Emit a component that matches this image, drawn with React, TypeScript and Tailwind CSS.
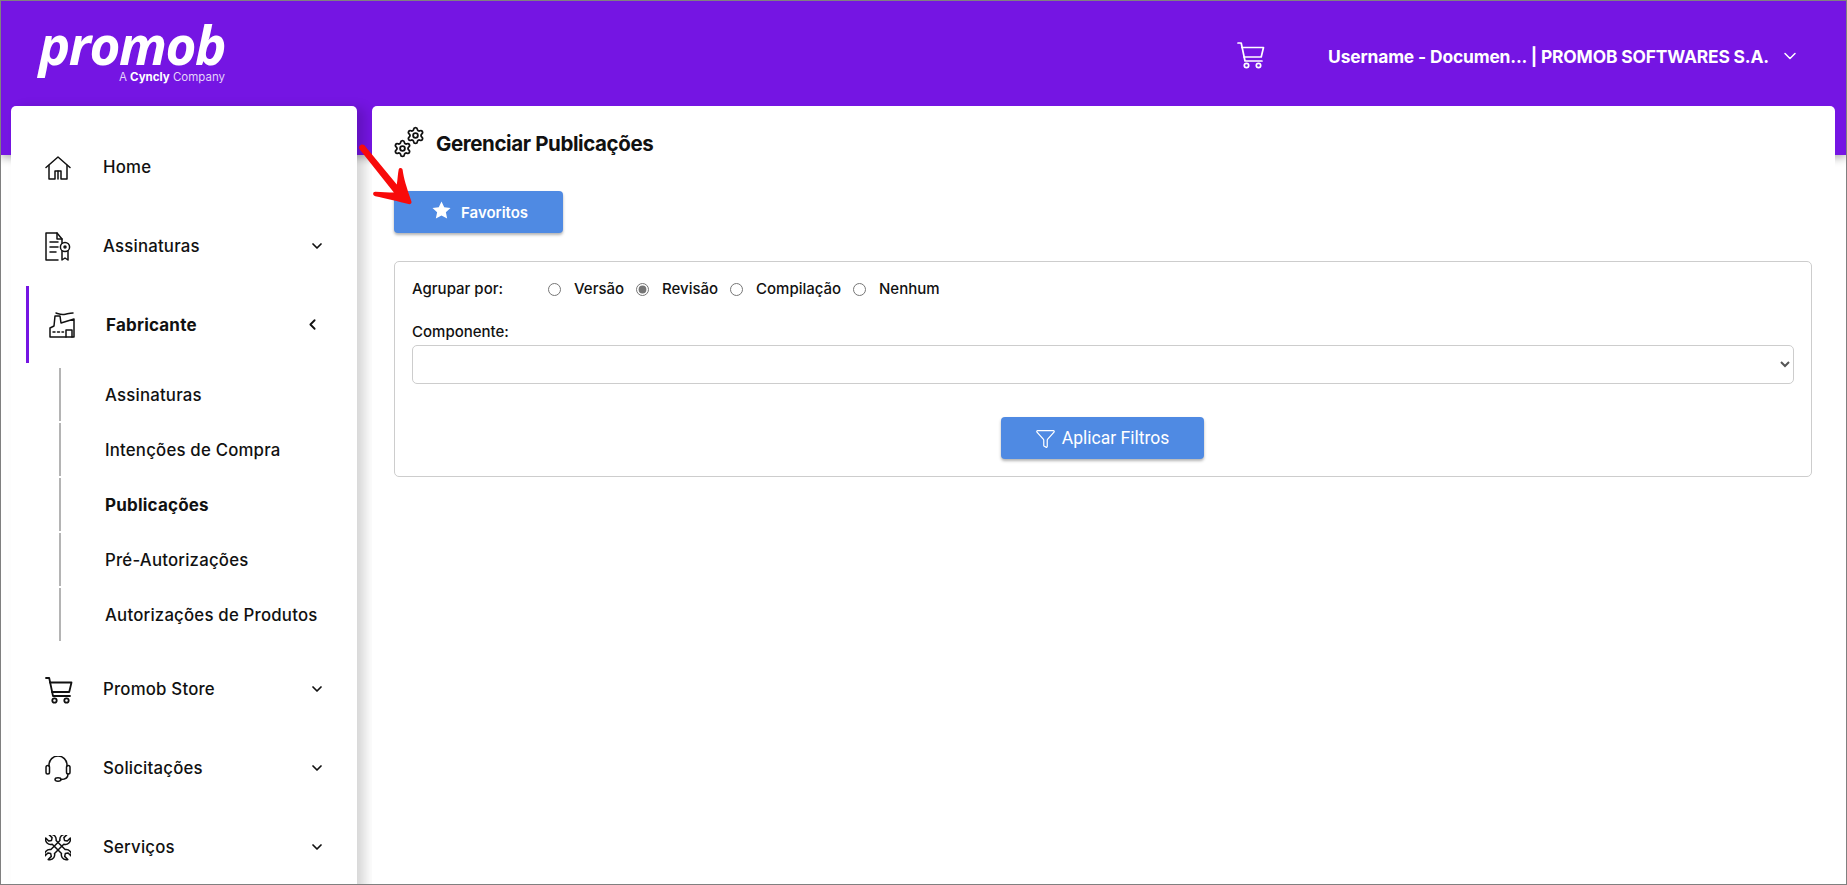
import React from "react";
import { ChevronDown, ChevronLeft, Settings, Funnel } from "lucide-react";

const Cart = ({ c = "currentColor", w = 1.6, s = 28 }: { c?: string; w?: number; s?: number }) => (
  <svg width={s} height={s} viewBox="0 0 28 27" fill="none" stroke={c} strokeWidth={w} strokeLinecap="round" strokeLinejoin="round">
    <path d="M1 1.5h3.2L8 19.5h17" />
    <path d="M5 6h21.5l-2.3 9.5H7" />
    <circle cx="9.5" cy="24" r="2.2" />
    <circle cx="21.5" cy="24" r="2.2" />
  </svg>
);

const HomeIcon = () => (
  <svg width="26" height="24" viewBox="0 0 26 24" fill="none" stroke="#111" strokeWidth="1.5" strokeLinejoin="round" strokeLinecap="round">
    <path d="M1 11.5 13 1l12 10.500" />
    <path d="M4 9.500V23h6v-8h6v8h6V9.500" />
    <path d="M13 15v8" />
  </svg>
);

const DocIcon = () => (
  <svg width="26" height="30" viewBox="0 0 26 30" fill="none" stroke="#111" strokeWidth="1.5" strokeLinejoin="round" strokeLinecap="round">
    <path d="M13 28H1V1h11l5 6v4" />
    <path d="M12 1v6h5" />
    <path d="M5 10h8M5 15h8M5 20h6" />
    <circle cx="20" cy="15" r="4.600" />
    <circle cx="20" cy="15" r="1" />
    <path d="M17 19v9l3-2 3 2v-9" />
  </svg>
);

const FactoryIcon = () => (
  <svg width="27" height="27" viewBox="0 0 27 27" fill="none" stroke="#111" strokeWidth="1.5" strokeLinejoin="round" strokeLinecap="round">
    <path d="M1 26V17l4-2 1-10h5l1 7 13-4v18H1Z" />
    <path d="M7 2c3 1 5 2 8 1.500 3-.3 5-1.500 9-1.500" />
    <path d="M4 21h2M8.500 21h2M13 21h1.500" />
    <path d="M17 26v-7h6v7" />
  </svg>
);

const Headset = () => (
  <svg width="26" height="26" viewBox="0 0 26 26" fill="none" stroke="#111" strokeWidth="1.500" strokeLinejoin="round" strokeLinecap="round">
    <path d="M4 10V9a9 9 0 0 1 18 0v1" />
    <rect x="1" y="9.500" width="3.500" height="8.500" rx="1.750" />
    <rect x="21.500" y="9.500" width="3.500" height="8.500" rx="1.750" />
    <path d="M23 18c0 4-3 5.500-7 5.500" />
    <ellipse cx="13" cy="23.500" rx="3" ry="1.700" />
  </svg>
);

const Wrench = ({ flip }: { flip?: boolean }) => (
  <g transform={flip ? "translate(26 0) scale(-1 1)" : undefined}>
    <path d="M18.500 9.500 9.500 18.500c.8 2.800-1.200 6-4.500 6.300-.7 0-1.300 0-1.800-.3l3.100-3.100-.6-2.800-2.800-.6-3 3c-1-3.600 2-7.200 6-6.500l9-9c-.6-3.800 2.400-6.700 6-6.200.4 0 .7.100 1 .3l-3 3 .6 2.800 2.800.6 3-3c1 3.700-2.600 7.400-6.300 6.300" />
  </g>
);

const Tools = () => (
  <svg width="26" height="26" viewBox="0 0 26 26" fill="none" stroke="#111" strokeWidth="1.500" strokeLinejoin="round" strokeLinecap="round">
    <Wrench />
    <Wrench flip />
  </svg>
);

const Row = ({ icon, label }: { icon: React.ReactNode; label: string }) => (
  <div className="flex h-[79px] items-center pl-[34px] pr-[32px]">
    <div className="flex w-[58px] shrink-0 items-center">{icon}</div>
    <span className="flex-1 pt-[1px] text-[16.800px] font-medium tracking-[0.2px] text-[#111]">{label}</span>
    <ChevronDown size={16} strokeWidth={2.6} className="-mt-[2px] text-[#111]" />
  </div>
);

const SubRow = ({ label, bold }: { label: string; bold?: boolean }) => (
  <div className={`ml-[48px] mb-[2px] flex h-[53px] items-center border-l-2 border-[#b4b4b4] pl-[44px] pt-[3px] tracking-[0.2px] text-[#111] ${bold ? "text-[17px] font-bold" : "text-[16.800px] font-medium"}`}>
    {label}
  </div>
);

const RadioItem = ({ label, checked, labelWidth }: { label: string; checked?: boolean; labelWidth: string }) => (
  <label className="flex items-center">
    <input type="radio" name="grp" defaultChecked={checked} className="m-0 h-[13px] w-[13px] accent-[#757575]" />
    <span className={`ml-[13px] text-[15px] font-medium text-[#111] ${labelWidth}`}>{label}</span>
  </label>
);

export default function App() {
  return (
    <div className="box-border h-[885px] w-[1847px] overflow-hidden border border-[#808080] bg-white" style={{ fontFamily: "Inter, 'Liberation Sans', sans-serif" }}>
      <header className="flex h-[154px] items-start bg-[#7515e3] text-white shadow-[0_3px_8px_rgba(0,0,0,0.3)]">
        <div className="ml-[37px] mt-[21px] flex w-[187px] flex-col items-end leading-none">
          <span className="text-[53px] font-bold italic leading-[46px] tracking-[-1.500px]" style={{ fontFamily: "'Open Sans', sans-serif" }}>promob</span>
          <span className="mt-[3px] text-[11.500px] leading-[12px] text-[#e4d3fa]">
            A <b className="font-bold text-white">Cyncly</b> Company
          </span>
        </div>
        <div className="ml-auto mr-[46px] mt-[38px] flex items-center">
          <Cart c="#fff" w={1.7} />
          <span className="ml-[63px] pt-[5px] text-[17.400px] font-bold tracking-[-0.15px]">Username - Documen... | PROMOB SOFTWARES S.A.</span>
          <ChevronDown size={20} strokeWidth={1.8} className="ml-[11px] mt-[3px]" />
        </div>
      </header>

      <main className="relative -mt-[49px] flex gap-[15px] pl-[10px] pr-[11px]">
        <nav className="h-[800px] w-[346px] shrink-0 overflow-hidden rounded-t-[5px] bg-white pt-[22px] shadow-[8px_2px_12px_rgba(0,0,0,0.16)]">
          <div className="flex h-[79px] items-center pl-[34px]">
            <div className="w-[58px]"><HomeIcon /></div>
            <span className="pt-[1px] text-[16.800px] font-medium tracking-[0.2px] text-[#111]">Home</span>
          </div>
          <Row icon={<DocIcon />} label="Assinaturas" />
          <div className="ml-[15px] flex h-[77px] items-center border-l-[3px] border-[#7515e3] pl-[20px] pr-[36px]">
            <div className="w-[57px]"><FactoryIcon /></div>
            <span className="flex-1 pt-[2px] text-[17px] font-bold tracking-[0.2px] text-[#111]">Fabricante</span>
            <ChevronLeft size={17} strokeWidth={2.6} className="text-[#111]" />
          </div>
          <div className="pt-[5px]">
            <SubRow label="Assinaturas" />
            <SubRow label="Intenções de Compra" />
            <SubRow bold label="Publicações" />
            <SubRow label="Pré-Autorizações" />
            <SubRow label="Autorizações de Produtos" />
          </div>
          <div className="pt-[7px]">
            <Row icon={<Cart c="#111" w={1.8} />} label="Promob Store" />
            <Row icon={<Headset />} label="Solicitações" />
            <Row icon={<Tools />} label="Serviços" />
          </div>
        </nav>

        <section className="h-[800px] flex-1 rounded-t-[5px] bg-white pl-[22px] pr-[23px] pt-[21px]">
          <div className="flex h-[34px] items-center">
            <div className="relative h-[34px] w-[42px]">
              <Settings size={19} strokeWidth={2.3} className="absolute -left-[1px] top-[12px] text-[#111]" />
              <Settings size={19} strokeWidth={2.3} className="absolute left-[12px] -top-[1px] text-[#111]" />
            </div>
            <h1 className="text-[20.500px] font-bold tracking-[-0.4px] text-[#111]">Gerenciar Publicações</h1>
          </div>

          <button className="mt-[30px] flex h-[42px] w-[169px] items-center rounded-[4px] bg-[#4f8ae3] pl-[38px] pt-[3px] text-[15px] font-semibold text-white shadow-[0_2px_3px_rgba(0,0,0,0.3)]">
            <svg width="19" height="18" viewBox="0 0 24 23" fill="#fff" className="-mt-[7px]"><path d="M12 0.500l3.500 7.400 8 1-5.900 5.500 1.600 8L12 18.500l-7.200 3.900 1.600-8L.5 8.900l8-1Z" /></svg>
            <span className="ml-[10px]">Favoritos</span>
          </button>

          <div className="mt-[28px] h-[216px] rounded-[5px] border border-[#cdcdcd] px-[17px] pt-[17px]">
            <div className="flex h-[20px] items-center">
              <span className="w-[136px] text-[15px] font-medium text-[#111]">Agrupar por:</span>
              <RadioItem label="Versão" labelWidth="w-[62px]" />
              <RadioItem checked label="Revisão" labelWidth="w-[68px]" />
              <RadioItem label="Compilação" labelWidth="w-[97px]" />
              <RadioItem label="Nenhum" labelWidth="w-[70px]" />
            </div>
            <label className="mt-[23px] block text-[15px] font-medium leading-[20px] text-[#111]">Componente:</label>
            <select className="mt-[3px] box-border block h-[39px] w-full rounded-[5px] border border-[#cdcdcd] bg-white pr-[2px] text-[#555]"></select>
            <div className="mt-[33px] flex justify-center pr-[2px]">
              <button className="flex h-[42px] w-[203px] items-center justify-center rounded-[4px] bg-[#4f8ae3] text-[17.500px] text-white shadow-[0_2px_3px_rgba(0,0,0,0.3)]" style={{ fontFamily: "Roboto, sans-serif" }}>
                <Funnel size={21} strokeWidth={1.4} className="mr-[6px]" />
                Aplicar Filtros
              </button>
            </div>
          </div>
        </section>

        <svg className="absolute left-[349px] top-[38px]" width="78" height="72" viewBox="0 0 80 80" preserveAspectRatio="none" fill="#f80a0a">
          <path d="M11 1c2-1 4 0 5 2l32 42c1-7 1-12 2-17 .5-2 4-2 4 1 1 9 4 19 9 35 .5 2-1 3-2 3-11-3-25-7-35-9-3-1-3-5 0-5 7 0 13 1 19 1L10 6c-1-2-1-4 1-5Z" />
        </svg>
      </main>
    </div>
  );
}
